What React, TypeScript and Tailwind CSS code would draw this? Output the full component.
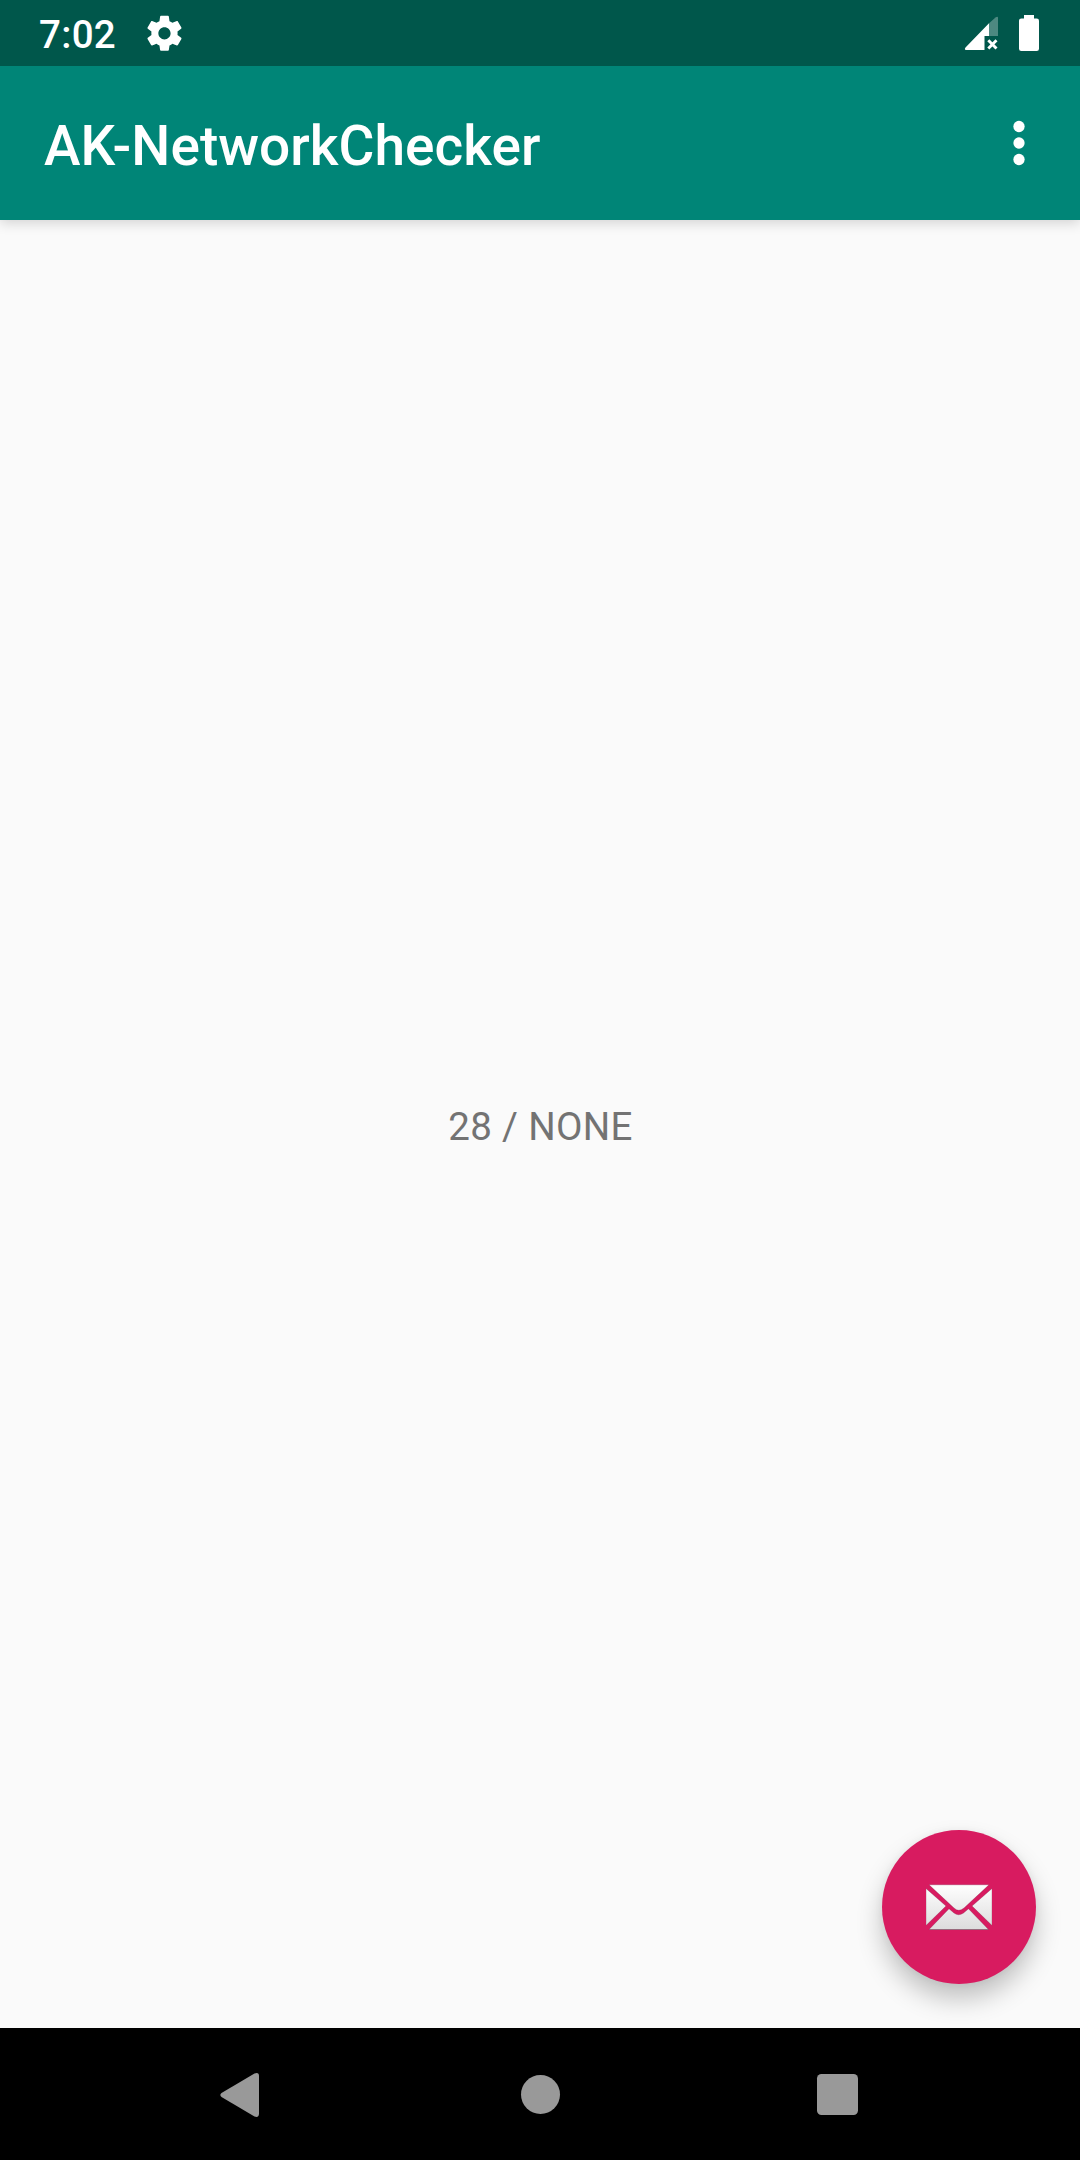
function StatusBar() {
  return (
    <div className="z-20 flex h-[66px] shrink-0 items-center bg-[#00574b] text-white">
      <span className="mt-[3px] ml-[39px] w-[80px] text-[38.5px] leading-[45px] font-medium tracking-[0.3px] whitespace-nowrap">7:02</span>
      <svg className="ml-[25px] h-[42px] w-[42px]" viewBox="0 0 24 24" fill="currentColor">
        <path d="M19.43 12.98c.04-.32.07-.64.07-.98s-.03-.66-.07-.98l2.11-1.65c.19-.15.24-.42.12-.64l-2-3.46c-.12-.22-.39-.3-.61-.22l-2.49 1c-.52-.4-1.08-.73-1.69-.98l-.38-2.65C14.46 2.18 14.25 2 14 2h-4c-.25 0-.46.18-.49.42l-.38 2.65c-.61.25-1.17.59-1.69.98l-2.49-1c-.23-.09-.49 0-.61.22l-2 3.46c-.13.22-.07.49.12.64l2.11 1.65c-.04.32-.07.65-.07.98s.03.66.07.98l-2.11 1.65c-.19.15-.24.42-.12.64l2 3.46c.12.22.39.3.61.22l2.49-1c.52.4 1.08.73 1.69.98l.38 2.65c.03.24.24.42.49.42h4c.25 0 .46-.18.49-.42l.38-2.65c.61-.25 1.17-.59 1.69-.98l2.49 1c.23.09.49 0 .61-.22l2-3.46c.12-.22.07-.49-.12-.64l-2.11-1.65zM12 15.5c-1.93 0-3.5-1.57-3.5-3.5s1.57-3.5 3.5-3.5 3.5 1.57 3.5 3.5-1.57 3.5-3.5 3.5z" transform="translate(-.3 .15)" />
      </svg>
      <svg className="mr-[36px] ml-auto h-[66px] w-[84px]" viewBox="960 0 84 66" fill="currentColor">
        <path d="M989 23.300 995.500 17.500Q998 16 998 18V36H989Z" opacity=".3" />
        <path d="M989 23.300V36H984.500V50H966Q964 49.500 965.500 47.500Z" />
        <path d="m988.300 40.300 8.200 8.200m0-8.200-8.200 8.200" stroke="currentColor" strokeWidth="2.900" />
        <path d="M1024 15h10v3.500h2.700q2.300 0 2.300 2.300v27.900q0 2.300-2.300 2.300h-15.400q-2.300 0-2.300-2.300V20.800q0-2.300 2.300-2.300h2.700Z" />
      </svg>
    </div>
  );
}

function AppBar() {
  return (
    <header className="z-10 flex h-[154px] shrink-0 items-center justify-between bg-[#008577] pl-[44px] text-white shadow-[0_3px_12px_rgba(0,0,0,0.16)]">
      <h1 className="mt-[5px] text-[55px] leading-[64px] font-medium tracking-[0.04px] whitespace-nowrap">AK-NetworkChecker</h1>
      <button aria-label="More options" className="mr-[28px] h-[66px] w-[66px]">
        <svg className="h-[66px] w-[66px]" viewBox="0 0 24 24" fill="currentColor">
          <circle cx="12" cy="6" r="2.050" />
          <circle cx="12" cy="12" r="2.050" />
          <circle cx="12" cy="18" r="2.050" />
        </svg>
      </button>
    </header>
  );
}

function MailIcon() {
  return (
    <svg className="h-[46px] w-[66px]" viewBox="0 0 66 46">
      <defs>
        <linearGradient id="paper" x1="0" y1="0" x2="0" y2="46" gradientUnits="userSpaceOnUse">
          <stop stopColor="#ffffff" />
          <stop offset="1" stopColor="#dcdcdc" />
        </linearGradient>
      </defs>
      <g fill="url(#paper)" stroke="#681338" strokeOpacity=".3" strokeWidth=".9">
        <path d="M3 .8H63L38 24Q32.500 28.500 28 24Z" />
        <path d="M0 4.500 20 22 0 41.500Z" />
        <path d="M66 4.500 46 22 66 41.500Z" />
        <path d="M3 45.500 23 24.800 28 29Q32.500 32.500 37.500 29L42.500 24.800 62.500 45.500Z" />
      </g>
      <path d="M3.500 45.500H62.500" stroke="#777" strokeOpacity=".5" />
    </svg>
  );
}

function NavigationBar() {
  return (
    <nav className="flex h-[132px] shrink-0 items-center justify-between bg-black pr-[222px] pl-[220px] text-[#999]">
      <button aria-label="Back">
        <svg className="mt-px h-[46px] w-[40px]" viewBox="0 0 40 46" fill="currentColor">
          <path d="M1.500 20.900 34.500 1.500Q39 -.2 39 4V41.500Q39 46 34.500 44.500L1.500 25.100Q-.8 23 1.500 20.900Z" />
        </svg>
      </button>
      <button aria-label="Home" className="mt-px ml-[3px] h-[39px] w-[39px] rounded-full bg-[#999]" />
      <button aria-label="Recents" className="mt-px h-[41px] w-[41px] rounded-[4.5px] bg-[#999]" />
    </nav>
  );
}

export default function App() {
  return (
    <div className="relative flex h-[2160px] w-[1080px] flex-col overflow-hidden bg-[#fafafa] font-[Roboto,sans-serif]">
      <StatusBar />
      <AppBar />
      <main className="flex flex-1 items-center justify-center">
        <p className="mt-[5px] ml-px text-[38.5px] leading-[45px] tracking-[0.35px] text-[#737373]">28 / NONE</p>
      </main>
      <button
        aria-label="Send email"
        className="absolute right-[44px] bottom-[176px] flex h-[154px] w-[154px] items-center justify-center rounded-full bg-[#d81b60] shadow-[0_15px_26px_rgba(0,0,0,0.23),0_1px_8px_rgba(0,0,0,0.05)]"
      >
        <MailIcon />
      </button>
      <NavigationBar />
    </div>
  );
}
